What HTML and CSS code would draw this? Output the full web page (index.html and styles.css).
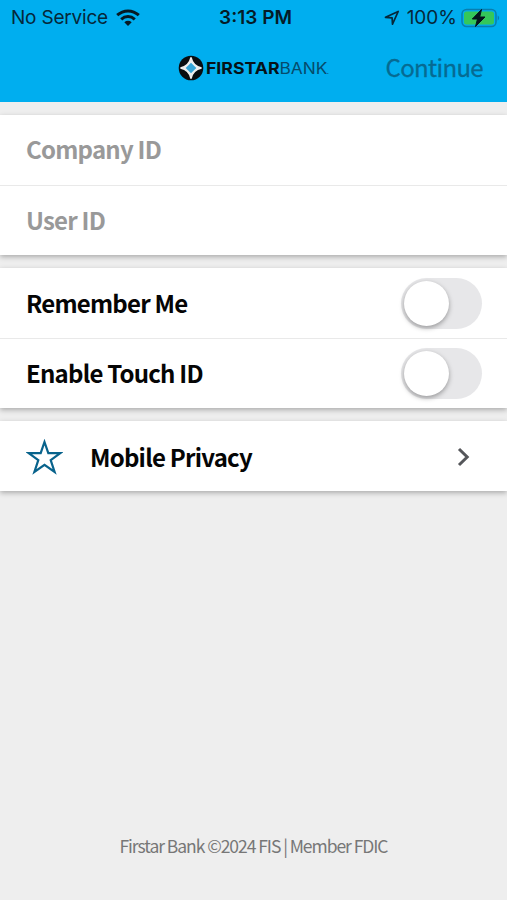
FILE: index.html
```html
<!DOCTYPE html>
<html lang="en">
<head>
<meta charset="utf-8">
<title>Firstar Bank</title>
<link rel="stylesheet" href="styles.css">
</head>
<body>
<header class="header">
  <div class="status">
    <div class="status-left">
      <span class="service">No Service</span>
      <svg class="wifi" width="24" height="18" viewBox="0 0 24 18">
        <g fill="none" stroke="#061a24" stroke-width="3">
          <path d="M1.2 6.2C7.4.5 16.600.5 22.800 6.200"/>
          <path d="M5.200 10.300C9.200 6.700 14.800 6.700 18.800 10.300"/>
        </g>
        <path d="M8.300 13.200Q12 10.300 15.700 13.200L12 17Z" fill="#061a24"/>
      </svg>
    </div>
    <span class="time">3:13 PM</span>
    <div class="status-right">
      <svg class="location" width="16" height="16" viewBox="0 0 16 16"><path d="M1.500 7.300 14.200 1.500 8.500 14.200 8.100 7.800Z" fill="none" stroke="#06283a" stroke-width="1.700" stroke-linejoin="round"/></svg>
      <span class="percent">100%</span>
      <svg class="battery" width="39" height="20" viewBox="0 0 39 20">
        <rect x="1" y="1.500" width="34" height="17" rx="4.500" fill="none" stroke="#087eaf" stroke-width="1.500"/>
        <rect x="3" y="3.500" width="30" height="13" rx="2.500" fill="#35c75a"/>
        <path d="M36.700 7.300q3 2.700 0 5.400Z" fill="#087eaf"/>
        <path d="M20.500 1.500 11.300 11h5.200l-2 7.500L24 9h-5.300Z" fill="#04151d" stroke="#04151d" stroke-width="1" stroke-linejoin="round"/>
      </svg>
    </div>
  </div>
  <div class="nav">
    <div class="logo">
      <svg class="emblem" width="26" height="26" viewBox="0 0 26 26">
        <circle cx="13" cy="13" r="12.300" fill="#080c10"/>
        <path d="M13 2.500Q14.800 11.200 23.500 13 14.800 14.800 13 23.500 11.200 14.800 2.500 13 11.200 11.200 13 2.500Z" fill="#eee" stroke="#eee" stroke-width="1.500"/>
        <path d="M13 7.700 18.300 13 13 18.300 7.700 13Z" fill="#35a5d8"/>
      </svg>
      <svg class="wordmark" width="123" height="20" viewBox="0 0 123 20">
        <text class="word-bold" x="0" y="16" textLength="73.500" lengthAdjust="spacingAndGlyphs">FIRSTAR</text>
        <text class="word-light" x="73.500" y="16" textLength="48" lengthAdjust="spacingAndGlyphs">BANK</text>
        <circle cx="121.800" cy="15.500" r=".5" fill="#064b6c"/>
      </svg>
    </div>
    <span class="continue">Continue</span>
  </div>
</header>
<main class="main">
  <section class="card">
    <div class="row"><span class="label hint raised">Company ID</span></div>
    <div class="row"><span class="label hint raised">User ID</span></div>
  </section>
  <section class="card">
    <div class="row"><span class="label">Remember Me</span><span class="toggle"><span class="knob"></span></span></div>
    <div class="row"><span class="label raised">Enable Touch ID</span><span class="toggle"><span class="knob"></span></span></div>
  </section>
  <section class="card">
    <div class="row link">
      <svg class="star" width="37" height="36" viewBox="0 0 37 36"><path d="M18.500 3 22.300 14.100H34.300L24.700 21.100 28.600 33 18.500 25.900 8.400 33 12.300 21.100 2.700 14.100H14.700Z" fill="none" stroke="#08638c" stroke-width="2.200"/></svg>
      <span class="label privacy">Mobile Privacy</span>
      <svg class="chevron" width="14" height="20" viewBox="0 0 14 20"><path d="M2 2 10.200 10 2 18" fill="none" stroke="#55565a" stroke-width="3"/></svg>
    </div>
  </section>
</main>
<footer class="footer"><span class="legal">Firstar Bank ©2024 FIS | Member FDIC</span></footer>
</body>
</html>
```
FILE: styles.css
```css
* { box-sizing: border-box; }
body {
  margin: 0;
  height: 900px;
  display: flex;
  flex-direction: column;
  background: #eee;
  font-family: "Noto Sans CJK SC", "Noto Sans", sans-serif;
  overflow: hidden;
}
.header { height: 102px; background: #00aeef; flex: none; }
.status {
  height: 34px;
  display: grid;
  grid-template-columns: 1fr auto 1fr;
  align-items: center;
  padding: 0 7px 0 11px;
  font-family: Inter, "Liberation Sans", sans-serif;
  font-size: 19px;
  line-height: 34px;
  color: #06283a;
}
.status-left, .status-right { display: flex; align-items: center; white-space: nowrap; }
.status-right { justify-content: flex-end; }
.service { letter-spacing: -.2px; }
.service, .time, .percent { padding-top: 1px; }
.wifi { margin-left: 8px; }
.time { font-weight: 600; color: #051b27; }
.location { margin-right: 7px; }
.battery { margin-left: 4px; }
.nav {
  height: 68px;
  display: grid;
  grid-template-columns: 1fr auto 1fr;
  align-items: center;
  padding: 0 25px;
}
.logo { grid-column: 2; display: flex; align-items: center; gap: 2px; }
.word-bold { font: 700 16px Inter, sans-serif; fill: #061117; }
.word-light { font: 400 16px Inter, sans-serif; fill: #064b6c; }
.continue {
  justify-self: end;
  margin-right: -1px;
  padding-bottom: 2px;
  font-size: 24px;
  line-height: 34px;
  letter-spacing: -.65px;
  color: #066a92;
  -webkit-text-stroke: .3px #066a92;
}
.main { display: flex; flex-direction: column; gap: 13px; padding-top: 13px; }
.card { background: #fff; box-shadow: 0 2px 5px rgba(0, 0, 0, .28); }
.row { height: 70px; display: flex; align-items: center; padding: 0 25px 0 26px; }
.row + .row { border-top: 1px solid #e9e9e9; }
.label {
  font-size: 24px;
  font-weight: 700;
  line-height: 34px;
  letter-spacing: -.78px;
  color: #050505;
  white-space: nowrap;
}
.hint { color: #999; }
.raised { padding-bottom: 2px; }
.link { padding-top: 1px; }
.toggle {
  width: 81px;
  height: 51px;
  margin-left: auto;
  padding: 3px;
  border-radius: 26px;
  background: #e7e7e9;
}
.knob {
  display: block;
  width: 45px;
  height: 45px;
  border-radius: 50%;
  background: #fff;
  box-shadow: 0 2px 5px rgba(0, 0, 0, .35);
}
.privacy { margin-left: 27px; }
.chevron { margin-left: auto; margin-right: 11px; }
.footer { margin-top: auto; height: 108px; text-align: center; }
.legal { font-size: 17.500px; line-height: 108px; color: #777; letter-spacing: -1.050px; }
```
